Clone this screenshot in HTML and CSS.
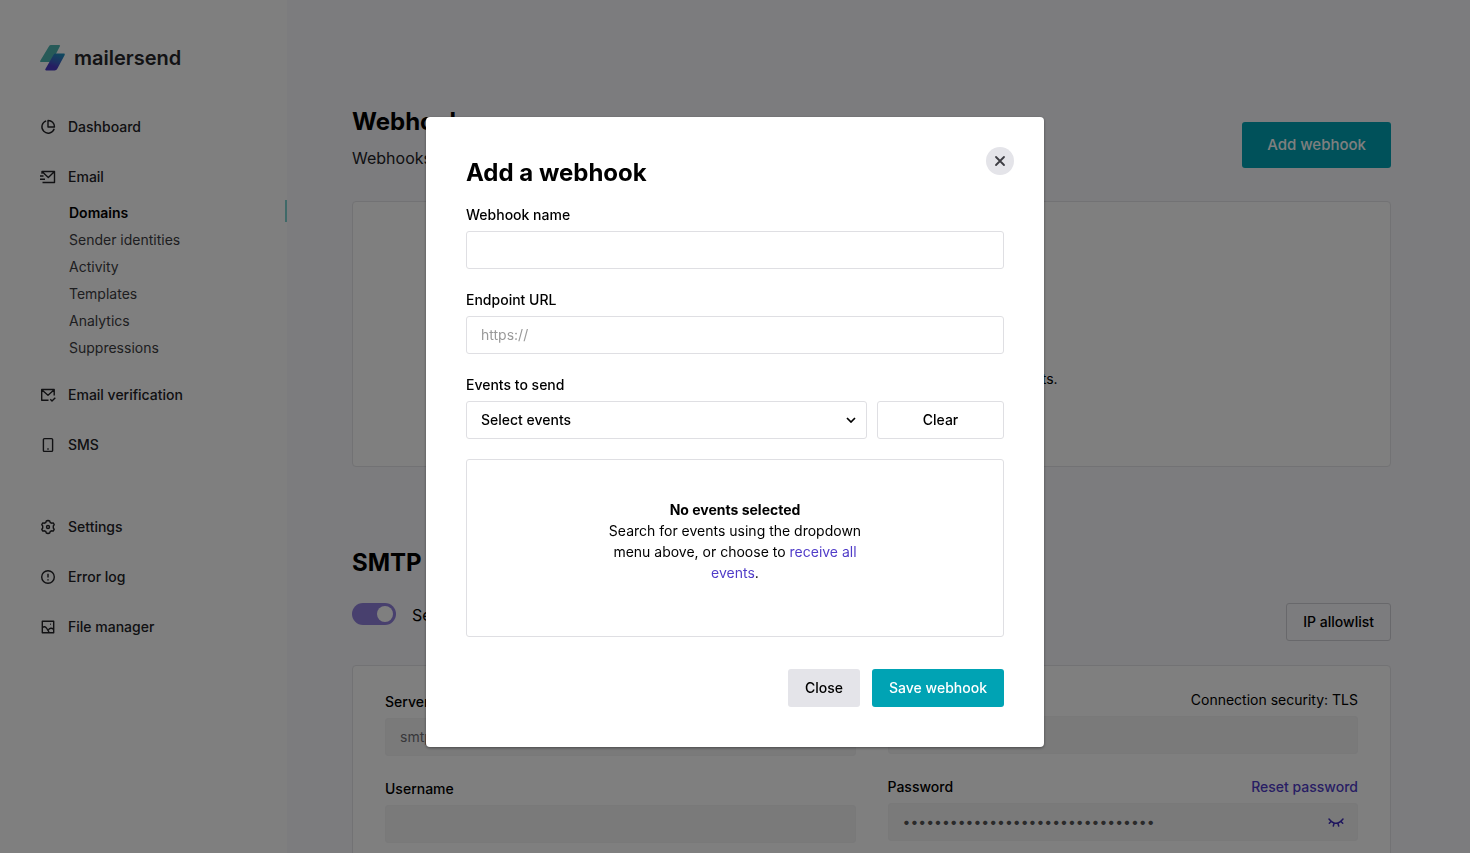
FILE: index.html
```html
<!DOCTYPE html>
<html lang="en">
  <head>
    <meta charset="utf-8">
    <meta name="viewport" content="width=device-width, initial-scale=1">
    <title>Webhooks - MailerSend</title>
    <link rel="stylesheet" href="styles.css">
  </head>
  <body>
    <div class="page">
      <aside class="sidebar">
        <a class="logo" href="#">
          <svg width="26" height="26" viewBox="0 0 26 26">
            <defs>
              <linearGradient id="logo-blue" x1="0.7" y1="0" x2="0.3" y2="1">
                <stop offset="0" stop-color="#1f8fbd"/>
                <stop offset="0.5" stop-color="#3c5fc4"/>
                <stop offset="0.75" stop-color="#4b3bc4"/>
              </linearGradient>
            </defs>
            <path d="M9 1.2Q9.6 0 11 0H19Q20.600 0 19.900 1.300L12.700 15.200Q11.900 17 10 17H1.200Q-0.400 17 0.400 15.600Z" fill="#4fb5b0"/>
            <path d="M13.600 9.700Q14.200 8.500 15.600 8.500H23.800Q25.400 8.500 24.700 9.900L17.300 23.700Q16.500 25.500 14.600 25.500H6.200Q4.600 25.500 5.400 24.100Z" fill="url(#logo-blue)"/>
          </svg>
          <span>mailersend</span>
        </a>

        <nav class="nav">
          <a class="nav-item" href="#">
            <svg class="icon" viewBox="0 0 16 16"><path d="M6.200 1.900A6.300 6.300 0 1 0 14.200 9.800M8 1.500V8H14.500A6.300 6.300 0 0 0 8 1.500Z"/></svg>
            Dashboard
          </a>
          <a class="nav-item" href="#">
            <svg class="icon" viewBox="0 0 16 16"><path d="M2 4.800V2.500H14.500V13.500H2.500M2.500 3L8.300 8.600L14 3M0 7H3.500M0 10.300H5"/></svg>
            Email
          </a>
          <ul class="subnav">
            <li><a class="active" href="#">Domains</a></li>
            <li><a href="#">Sender identities</a></li>
            <li><a href="#">Activity</a></li>
            <li><a href="#">Templates</a></li>
            <li><a href="#">Analytics</a></li>
            <li><a href="#">Suppressions</a></li>
          </ul>
          <a class="nav-item" href="#">
            <svg class="icon" viewBox="0 0 16 16"><path d="M8.500 13.200H1.700V2.500H14.200V8.500M2 3L8 8.200L13.900 3M10.300 12.300L12 14L15.300 10.700"/></svg>
            Email verification
          </a>
          <a class="nav-item" href="#">
            <svg class="icon" viewBox="0 0 16 16"><path d="M4.500 1.600H11.500Q12.600 1.600 12.600 2.600V13.400Q12.600 14.400 11.500 14.400H4.500Q3.400 14.400 3.400 13.400V2.600Q3.400 1.600 4.500 1.600ZM7.300 12H8.700"/></svg>
            SMS
          </a>
          <a class="nav-item nav-item-split" href="#">
            <svg class="icon" viewBox="0 0 16 16"><path d="M8 1.500L9.700 2L10.200 3.500L11.600 4.200L13.200 3.900L14.200 5.600L13.300 7V9L14.200 10.400L13.200 12.100L11.600 11.800L10.200 12.500L9.700 14L8 14.500L6.300 14L5.800 12.500L4.400 11.800L2.800 12.100L1.800 10.400L2.700 9V7L1.800 5.600L2.800 3.900L4.400 4.200L5.800 3.500L6.300 2Z"/><circle cx="8" cy="8" r="1.500"/></svg>
            Settings
          </a>
          <a class="nav-item" href="#">
            <svg class="icon" viewBox="0 0 16 16"><circle cx="8" cy="8" r="6.300"/><path d="M8 4.800V8.600M8 10.300V11.500"/></svg>
            Error log
          </a>
          <a class="nav-item" href="#">
            <svg class="icon" viewBox="0 0 16 16"><path d="M2.300 2.300H13.700V13.700H2.300ZM2.300 8.500Q5 6.500 6.800 9.500L9.200 13.500M8 11.500Q10.500 7.500 13.700 10.500M10.200 5.300H10.900"/></svg>
            File manager
          </a>
        </nav>
      </aside>

      <main class="main">
        <section class="section">
          <div class="section-head">
            <div class="section-title">
              <h1>Webhooks</h1>
              <p class="lead">Webhooks notify your app.</p>
            </div>
            <button class="btn btn-primary btn-large" type="button">Add webhook</button>
          </div>
          <div class="card card-empty">
            <p>Add your first webhook to start tracking all email events.</p>
          </div>
        </section>

        <section class="section">
          <h1>SMTP</h1>
          <div class="smtp-bar">
            <label class="switch">
              <input type="checkbox" checked>
              <span>Send emails with SMTP</span>
            </label>
            <button class="btn btn-outline" type="button">IP allowlist</button>
          </div>
          <div class="card smtp-card">
            <div class="smtp-col smtp-col-left">
              <div class="field">
                <label for="server">Server</label>
                <input class="readonly" id="server" type="text" value="smtp.mailersend.net" readonly>
              </div>
              <div class="field">
                <label for="username">Username</label>
                <input class="readonly" id="username" type="text" readonly>
              </div>
            </div>
            <div class="smtp-col">
              <div class="field">
                <div class="field-head">
                  <label for="port">Port</label>
                  <span>Connection security: TLS</span>
                </div>
                <input class="readonly" id="port" type="text" readonly>
              </div>
              <div class="field">
                <div class="field-head">
                  <label for="password">Password</label>
                  <a href="#">Reset password</a>
                </div>
                <div class="password">
                  <input class="readonly" id="password" type="password" value="abcdefghijklmnopqrstuvwxyz123456" readonly>
                  <button class="reveal" type="button" aria-label="Show password">
                    <svg width="16" height="10" viewBox="0 0 16 10"><path d="M1 1Q8 9.500 15 1M3.300 3.300L1.300 5.300M6.200 5L5.300 8M9.800 5L10.700 8M12.700 3.300L14.700 5.300"/></svg>
                  </button>
                </div>
              </div>
            </div>
          </div>
        </section>
      </main>
    </div>

    <div class="overlay">
      <form class="modal" role="dialog" aria-labelledby="modal-title">
        <button class="modal-close" type="button" aria-label="Close dialog">
          <svg width="12" height="12" viewBox="0 0 12 12"><path d="M2 2L10 10M10 2L2 10"/></svg>
        </button>
        <h2 id="modal-title">Add a webhook</h2>
        <div class="field">
          <label for="webhook-name">Webhook name</label>
          <input id="webhook-name" type="text">
        </div>
        <div class="field">
          <label for="endpoint">Endpoint URL</label>
          <input id="endpoint" type="text" placeholder="https://">
        </div>
        <div class="field">
          <label for="events">Events to send</label>
          <div class="events-row">
            <div class="select">
              <select id="events">
                <option>Select events</option>
              </select>
              <svg width="10" height="6" viewBox="0 0 10 6"><path d="M1 1L5 5L9 1"/></svg>
            </div>
            <button class="btn btn-outline btn-clear" type="button">Clear</button>
          </div>
        </div>
        <div class="events-empty">
          <p><strong>No events selected</strong><br>Search for events using the dropdown menu above, or choose to <a href="#">receive all events</a>.</p>
        </div>
        <div class="modal-actions">
          <button class="btn btn-grey" type="button">Close</button>
          <button class="btn btn-primary" type="submit">Save webhook</button>
        </div>
      </form>
    </div>
  </body>
</html>
```
FILE: styles.css
```css
* { box-sizing: border-box; }
body { margin: 0; overflow: hidden; background: #f8f8fc; color: #000; font: 14px/21px Inter, "Liberation Sans", sans-serif; }
h1, h2, p, ul { margin: 0; padding: 0; }
h1, h2 { font-size: 24px; line-height: 32px; font-weight: 700; }
a { color: #503cc8; text-decoration: none; }
input, select, button { font: inherit; color: inherit; }
svg { fill: none; stroke: currentColor; flex: none; }

.page { display: flex; height: 100vh; overflow: hidden; }

/* sidebar */
.sidebar { width: 287px; flex: none; padding: 45px 0 0 40px; background: #fff; }
.logo { display: flex; align-items: center; gap: 8px; height: 26px; color: #26262b; font-size: 20px; line-height: 26px; font-weight: 600; }
.logo svg { stroke: none; }
.nav { margin-top: 46px; }
.nav-item { display: flex; align-items: center; gap: 12px; height: 20px; margin-bottom: 30px; color: #222226; line-height: 20px; font-weight: 500; }
.nav-item-split { margin-top: 62px; }
.icon { width: 16px; height: 16px; stroke-width: 1.4; stroke-linejoin: round; }
.subnav { list-style: none; margin: -18px 0 24px; }
.subnav a { display: block; position: relative; padding-left: 29px; line-height: 27px; color: #3c3c42; }
.subnav .active { color: #000; font-weight: 600; }
.subnav .active::after { content: ""; position: absolute; right: 0; top: 1px; width: 2px; height: 22px; background: #7fd3d0; }

/* content */
.main { flex: 1; min-width: 0; padding: 106px 79px 0 65px; }
.section { margin-bottom: 80px; }
.section-head { display: flex; justify-content: space-between; align-items: center; height: 78px; margin-bottom: 17px; }
.section-title { align-self: flex-start; }
.lead { margin-top: 8px; font-size: 16px; line-height: 24px; color: #222226; }
.card { background: #fff; border: 1px solid #e4e4e8; border-radius: 4px; }
.card-empty { display: flex; justify-content: center; height: 266px; padding-top: 166px; }

.btn { height: 38px; padding: 0 16px; border: 1px solid transparent; border-radius: 3px; background: #fff; line-height: 20px; font-weight: 500; white-space: nowrap; }
.btn-primary { background: #00a3b4; color: #fff; }
.btn-large { height: 46px; padding: 0 24px; font-size: 15px; }
.btn-grey { background: #e4e4e9; }
.btn-outline { border-color: #d0d0d6; background: transparent; }

.smtp-bar { display: flex; justify-content: space-between; align-items: flex-start; margin: 24px 0; }
.switch { display: flex; align-items: flex-start; gap: 16px; font-size: 16px; line-height: 24px; }
.switch input { appearance: none; width: 44px; height: 22px; margin: 0; padding: 3px; border-radius: 11px; background: #9080dc; }
.switch input::before { content: ""; display: block; width: 16px; height: 16px; margin-left: auto; border-radius: 50%; background: #fff; }
.smtp-card { display: grid; grid-template-columns: 1fr 1fr; gap: 32px; padding: 23px 32px 32px; }
.smtp-col .field { margin-bottom: 22px; }
.smtp-col-left { padding-top: 2px; }

/* form fields */
.field { margin-bottom: 20px; }
.field label { display: block; margin-bottom: 6px; font-weight: 500; }
.field input, .field select { display: block; width: 100%; height: 38px; padding: 0 14px 1px; border: 1px solid #dfdfe3; border-radius: 3px; background: #fff; }
.field input::placeholder { color: #999; }
.field .readonly { border-color: #f2f2f3; background: #f4f4f5; color: #707075; }
.field-head { display: flex; justify-content: space-between; }
.field-head a { font-weight: 500; }
.password { position: relative; }
.password .readonly { color: #555; }
.reveal { position: absolute; top: 15px; right: 14px; display: flex; padding: 0; border: 0; background: none; color: #3e2cbc; }
.reveal svg { stroke-width: 1.5; stroke-linecap: round; }

/* modal */
.overlay { position: fixed; inset: 0; padding: 117px 20px 20px; background: rgba(0, 0, 0, .5); }
.modal { position: relative; max-width: 618px; margin: 0 auto; padding: 40px; border-radius: 4px; background: #fff; box-shadow: 0 1px 3px rgba(0, 0, 0, .4); }
.modal h2 { margin-bottom: 15px; }
.modal-close { position: absolute; top: 30px; right: 30px; display: flex; align-items: center; justify-content: center; width: 28px; height: 28px; padding: 0; border: 0; border-radius: 50%; background: #e4e4e9; color: #3c3c42; }
.modal-close svg { stroke-width: 1.8; stroke-linecap: round; }
.events-row { display: flex; gap: 10px; }
.select { position: relative; flex: 1; }
.field .select select { appearance: none; font-weight: 500; }
.select svg { position: absolute; right: 11px; top: 16px; stroke-width: 1.7; pointer-events: none; }
.btn-clear { width: 127px; border-color: #dfdfe3; }
.events-empty { padding: 39px 0 53px; border: 1px solid #dfdfe3; border-radius: 3px; text-align: center; }
.events-empty p { width: 50%; margin: 0 auto; }
.modal-actions { display: flex; justify-content: flex-end; gap: 12px; margin-top: 32px; }
```
